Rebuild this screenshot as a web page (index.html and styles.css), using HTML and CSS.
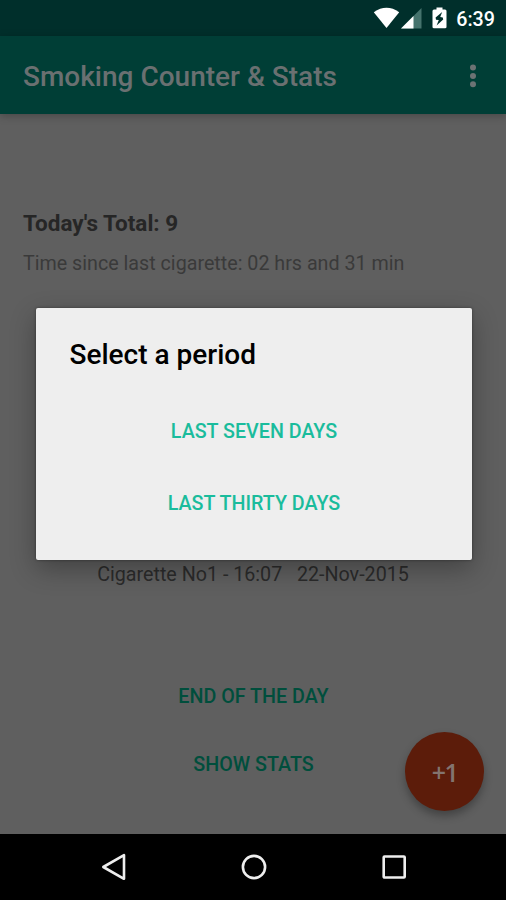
FILE: index.html
```html
<!DOCTYPE html>
<html lang="en">
  <head>
    <meta charset="UTF-8" />
    <title>Smoking Counter &amp; Stats</title>
    <link rel="stylesheet" href="styles.css">
  </head>
  <body>
    <div class="screen">
      <div class="status-bar">
        <svg class="wifi" width="27" height="22" viewBox="0 0 27 22">
          <path d="M0.8 5.2 Q13.5 -3.6 26.2 5.2 L13.5 21 Z" fill="#fff" />
        </svg>
        <svg class="signal" width="21" height="21" viewBox="0 0 21 21">
          <path d="M0 20.5 L20.5 0 V20.5 Z" fill="#45736d" />
          <path d="M0 20.5 L12.5 8 V20.5 Z" fill="#fff" />
        </svg>
        <svg class="battery" width="15" height="22" viewBox="0 0 15 22">
          <path d="M4.5 0.5 H10.5 V2.5 H13 Q14.5 2.5 14.5 4 V20 Q14.5 21.2 13 21.2 H2 Q0.5 21.2 0.5 20 V4 Q0.5 2.5 2 2.5 H4.5 Z" fill="#fff" />
          <path d="M10.2 5 L3.6 10.4 L4 12.8 L6.8 13 L4.6 18.6 L11.2 12.4 L10.8 10.4 L8.2 10 Z" fill="#002f2b" />
        </svg>
        <span class="clock">6:39</span>
      </div>

      <header class="app-bar">
        <h1>Smoking Counter &amp; Stats</h1>
        <svg class="more" width="8" height="24" viewBox="0 0 8 24" fill="#6c7374">
          <circle cx="4" cy="3.6" r="3" />
          <circle cx="4" cy="12" r="3" />
          <circle cx="4" cy="20.3" r="3" />
        </svg>
      </header>

      <main class="content">
        <h2 class="total">Today's Total: 9</h2>
        <p class="since">Time since last cigarette: 02 hrs and 31 min</p>
        <p class="entry">Cigarette No1 - 16:07 &nbsp; 22-Nov-2015</p>
        <button class="flat end-day">END OF THE DAY</button>
        <button class="flat show-stats">SHOW STATS</button>
        <button class="fab">+1</button>
      </main>

      <nav class="nav-bar">
        <svg width="28" height="30" viewBox="0 0 28 30">
          <path d="M3.3 15 L24 3.2 V26.8 Z" />
        </svg>
        <svg width="28" height="30" viewBox="0 0 28 30">
          <circle cx="14" cy="15" r="11.1" />
        </svg>
        <svg width="28" height="30" viewBox="0 0 28 30">
          <rect x="3.7" y="4.5" width="21" height="21" rx="0.8" />
        </svg>
      </nav>

      <div class="dialog">
        <h2>Select a period</h2>
        <button class="flat">LAST SEVEN DAYS</button>
        <button class="flat">LAST THIRTY DAYS</button>
      </div>
    </div>
  </body>
</html>
```

FILE: styles.css
```css
body {
  margin: 0;
  font-family: Roboto, "Liberation Sans", sans-serif;
}

h1,
h2,
p {
  margin: 0;
}

button {
  border: none;
  padding: 0;
  font-family: inherit;
  cursor: pointer;
}

.screen {
  position: relative;
  display: flex;
  flex-direction: column;
  width: 506px;
  height: 900px;
  overflow: hidden;
  background: #5f5f5f;
}

.status-bar {
  display: flex;
  align-items: center;
  justify-content: flex-end;
  height: 36px;
  padding-right: 11px;
  box-sizing: border-box;
  background: #002f2b;
}

.signal {
  margin-left: 1px;
}

.battery {
  margin-left: 10px;
}

.clock {
  margin-left: 9px;
  padding-top: 3px;
  color: #fff;
  font-size: 19.7px;
  font-weight: 500;
  line-height: 33px;
}

.app-bar {
  display: flex;
  align-items: center;
  justify-content: space-between;
  height: 78px;
  padding: 3px 29px 0 23px;
  box-sizing: border-box;
  background: #003e36;
  box-shadow: 0 2px 8px rgba(0, 0, 0, 0.25);
}

.app-bar h1 {
  color: #6a7071;
  font-size: 28px;
  font-weight: 500;
  line-height: 34px;
}

.more {
  margin-top: -2px;
}

.content {
  position: relative;
  display: flex;
  flex-direction: column;
  flex: 1;
  padding-top: 95px;
}

.total {
  padding-left: 23px;
  color: #262626;
  font-size: 22.5px;
  font-weight: 700;
  line-height: 28px;
}

.since {
  margin-top: 13px;
  padding-left: 23px;
  color: #3a3a3a;
  font-size: 19.7px;
  line-height: 28px;
}

.entry {
  margin-top: 283px;
  color: #2b2b2b;
  font-size: 19.7px;
  line-height: 28px;
  text-align: center;
}

.flat {
  padding-left: 1px;
  background: none;
  color: #1abc9c;
  font-size: 19.7px;
  font-weight: 500;
  line-height: 28px;
}

.end-day,
.show-stats {
  color: #004e3c;
}

.end-day {
  margin-top: 94px;
}

.show-stats {
  margin-top: 40px;
}

.fab {
  position: absolute;
  right: 22px;
  bottom: 23px;
  width: 79px;
  height: 79px;
  border-radius: 50%;
  background: #5c1c0a;
  color: #83746f;
  font-family: "Open Sans", sans-serif;
  font-size: 25px;
  font-weight: 600;
  letter-spacing: -1.5px;
  box-shadow: 0 5px 9px rgba(0, 0, 0, 0.3);
}

.nav-bar {
  display: flex;
  align-items: center;
  justify-content: center;
  gap: 112px;
  height: 66px;
  padding-left: 1px;
  background: #000;
}

.nav-bar svg {
  fill: none;
  stroke: #eee;
  stroke-width: 2.6;
  stroke-linejoin: round;
}

.dialog {
  position: absolute;
  top: 308px;
  left: 35.5px;
  display: flex;
  flex-direction: column;
  width: 436px;
  height: 252px;
  padding-top: 30px;
  box-sizing: border-box;
  border-radius: 2px;
  background: #eee;
  box-shadow: 0 0 3px rgba(0, 0, 0, 0.4), 0 9px 26px rgba(0, 0, 0, 0.3);
}

.dialog h2 {
  padding-left: 34px;
  color: #000;
  font-size: 28px;
  font-weight: 500;
  line-height: 34px;
}

.dialog .flat {
  margin-top: 44px;
}

.dialog h2 + .flat {
  margin-top: 46px;
}
```
